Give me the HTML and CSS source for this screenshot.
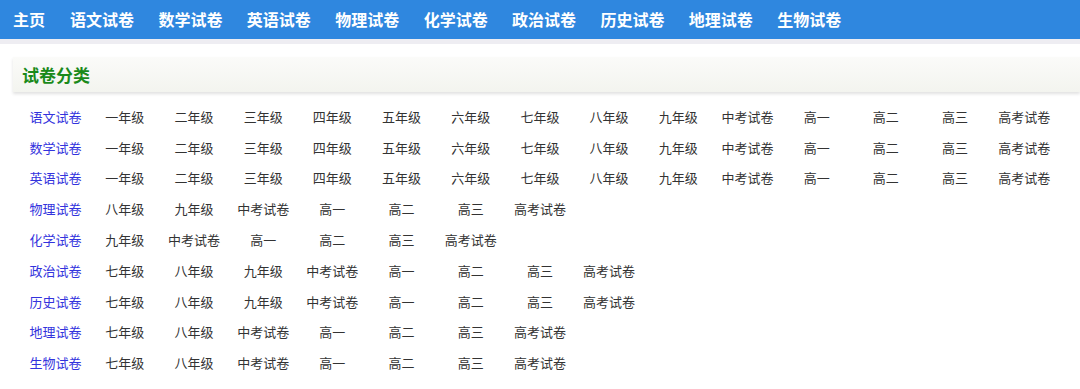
FILE: index.html
```html
<!DOCTYPE html>
<html lang="zh-CN">
<head>
    <meta charset="UTF-8">
    <title>试卷分类</title>
    <link rel="stylesheet" href="styles.css">
</head>
<body>

    <div class="nav">
        <a href="#">主页</a>
        <a href="#">语文试卷</a>
        <a href="#">数学试卷</a>
        <a href="#">英语试卷</a>
        <a href="#">物理试卷</a>
        <a href="#">化学试卷</a>
        <a href="#">政治试卷</a>
        <a href="#">历史试卷</a>
        <a href="#">地理试卷</a>
        <a href="#">生物试卷</a>
    </div>

    <div class="main">
        <div class="box-title">试卷分类</div>

        <div class="list">
            <div class="row">
                <a class="subject" href="#">语文试卷</a>
                <span>一年级</span><span>二年级</span><span>三年级</span><span>四年级</span><span>五年级</span><span>六年级</span><span>七年级</span><span>八年级</span><span>九年级</span><span>中考试卷</span><span>高一</span><span>高二</span><span>高三</span><span>高考试卷</span>
            </div>
            <div class="row">
                <a class="subject" href="#">数学试卷</a>
                <span>一年级</span><span>二年级</span><span>三年级</span><span>四年级</span><span>五年级</span><span>六年级</span><span>七年级</span><span>八年级</span><span>九年级</span><span>中考试卷</span><span>高一</span><span>高二</span><span>高三</span><span>高考试卷</span>
            </div>
            <div class="row">
                <a class="subject" href="#">英语试卷</a>
                <span>一年级</span><span>二年级</span><span>三年级</span><span>四年级</span><span>五年级</span><span>六年级</span><span>七年级</span><span>八年级</span><span>九年级</span><span>中考试卷</span><span>高一</span><span>高二</span><span>高三</span><span>高考试卷</span>
            </div>
            <div class="row">
                <a class="subject" href="#">物理试卷</a>
                <span>八年级</span><span>九年级</span><span>中考试卷</span><span>高一</span><span>高二</span><span>高三</span><span>高考试卷</span>
            </div>
            <div class="row">
                <a class="subject" href="#">化学试卷</a>
                <span>九年级</span><span>中考试卷</span><span>高一</span><span>高二</span><span>高三</span><span>高考试卷</span>
            </div>
            <div class="row">
                <a class="subject" href="#">政治试卷</a>
                <span>七年级</span><span>八年级</span><span>九年级</span><span>中考试卷</span><span>高一</span><span>高二</span><span>高三</span><span>高考试卷</span>
            </div>
            <div class="row">
                <a class="subject" href="#">历史试卷</a>
                <span>七年级</span><span>八年级</span><span>九年级</span><span>中考试卷</span><span>高一</span><span>高二</span><span>高三</span><span>高考试卷</span>
            </div>
            <div class="row">
                <a class="subject" href="#">地理试卷</a>
                <span>七年级</span><span>八年级</span><span>中考试卷</span><span>高一</span><span>高二</span><span>高三</span><span>高考试卷</span>
            </div>
            <div class="row">
                <a class="subject" href="#">生物试卷</a>
                <span>七年级</span><span>八年级</span><span>中考试卷</span><span>高一</span><span>高二</span><span>高三</span><span>高考试卷</span>
            </div>
        </div>
    </div>

</body>
</html>
```

FILE: styles.css
```css
body {
    margin: 0;
    font-family: "Noto Sans CJK SC", "Noto Sans", sans-serif;
    background: #ffffff;
    overflow: hidden;
}

a {
    text-decoration: none;
}

.nav {
    display: flex;
    height: 39px;
    align-items: center;
    padding-left: 1px;
    background: #2f87df;
    border-bottom: 5px solid #eeedf2;
}
.nav a {
    padding: 0 12px;
    margin-right: 0.4px;
    color: #ffffff;
    font-size: 16px;
    font-weight: bold;
    line-height: 39px;
}
.nav a:first-child {
    margin-right: 1px;
}

.main {
    padding: 13px 0 0 13px;
}

.box-title {
    height: 35px;
    line-height: 35px;
    padding-left: 9px;
    color: #1a8a1a;
    font-size: 17px;
    font-weight: bold;
    background: linear-gradient(#fbfbf9, #f3f4ef);
    box-shadow: 0 2px 3px rgba(0, 0, 0, 0.12);
}

.list {
    padding: 9px 0 0 8px;
}
.row {
    display: flex;
    height: 30.8px;
    align-items: center;
}
.row span,
.row .subject {
    width: 69.2px;
    flex: none;
    text-align: center;
    font-size: 13px;
    color: #333333;
}
.row .subject {
    color: #3333dd;
}
```
